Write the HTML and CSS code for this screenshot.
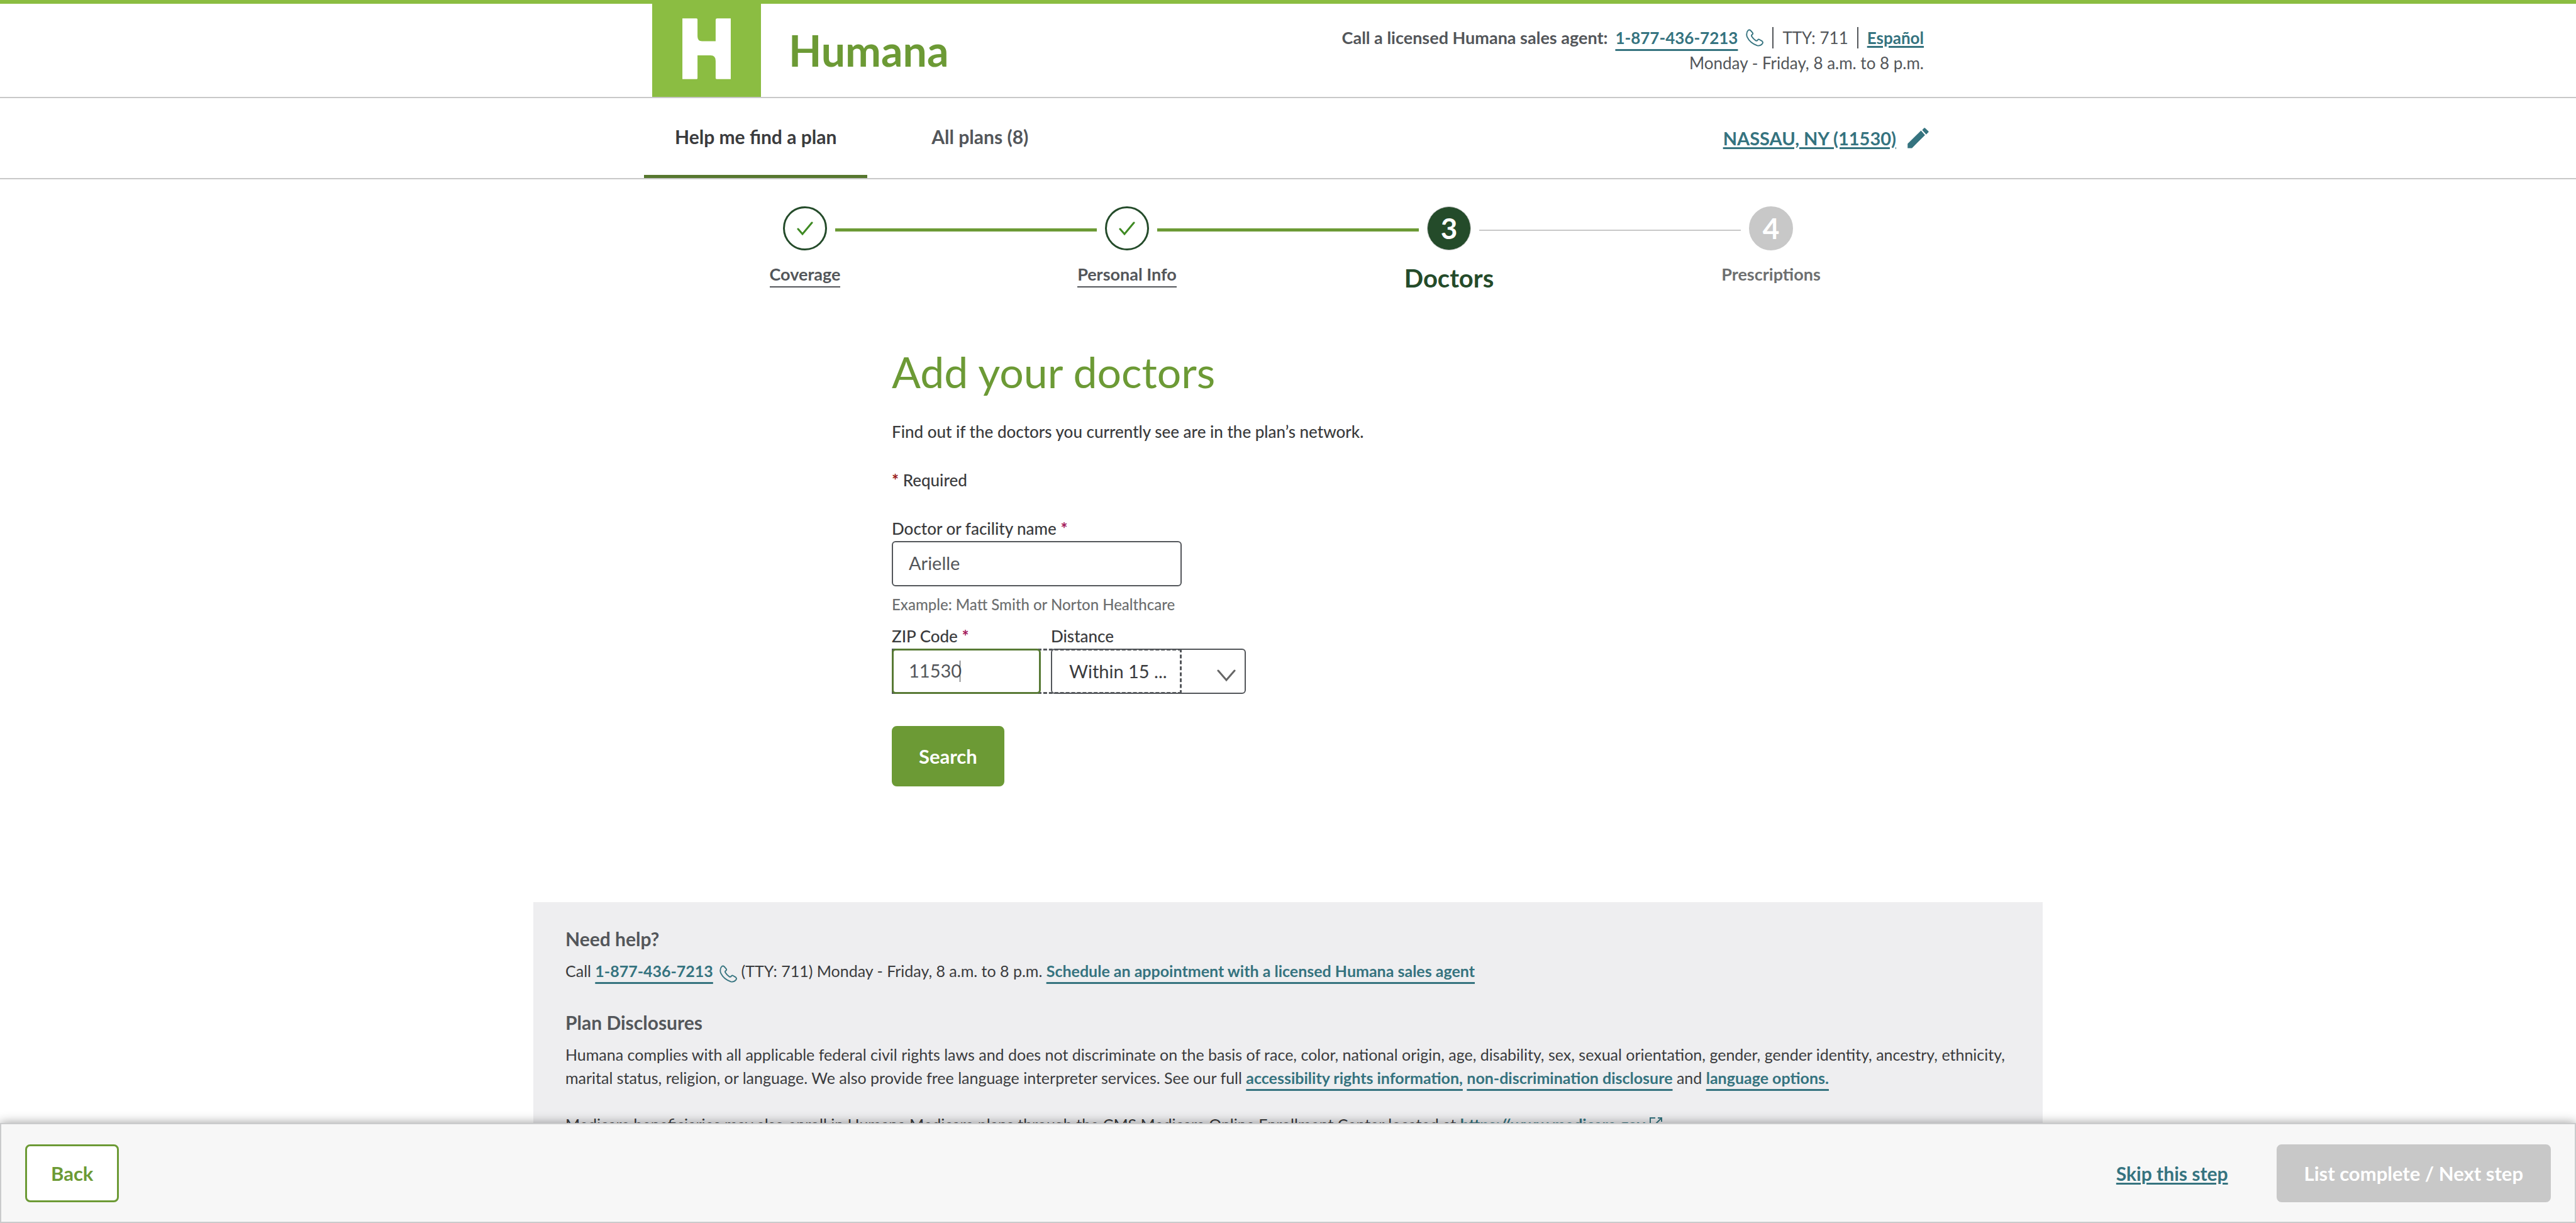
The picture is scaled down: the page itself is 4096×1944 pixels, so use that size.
FILE: index.html
```html
<!DOCTYPE html>
<html lang="en">
<head>
<meta charset="utf-8">
<meta name="viewport" content="width=device-width, initial-scale=1">
<title>Add your doctors | Humana</title>
<link rel="stylesheet" href="styles.css">
</head>
<body>
<svg class="sprite" aria-hidden="true">
  <symbol id="phone" viewBox="0 0 104 104">
    <path d="M5 30Q5 16 14 8Q21 2 28 9L40 23Q44 29 38 33Q31 37 35 45Q45 61 59 69Q66 72 69 66Q74 59 81 63L96 72Q104 79 97 88Q85 102 67 98Q25 84 8 48Q4 39 5 30Z" fill="none" stroke="currentColor" stroke-width="7" stroke-linejoin="round"/>
  </symbol>
</svg>
<div class="page">
  <header class="masthead">
    <div class="container masthead-row">
      <a class="brand" href="#" aria-label="Humana home">
        <svg class="brand-mark" viewBox="0 0 216 184" preserveAspectRatio="none" aria-hidden="true">
          <rect width="216" height="184" fill="#8bbd42"/>
          <path fill="#fff" d="M60 29H88Q90 29 90 31V64Q90 74 99 74H126V32Q126 29 129 29H156V149H129Q126 149 126 147V113Q126 102 116 102H90V147Q90 149 88 149H60Z"/>
        </svg>
        <span class="brand-name">Humana</span>
      </a>
      <div class="contact">
        <div class="contact-line">
          <strong>Call a licensed Humana sales agent:</strong>
          <a class="link phone-link" href="tel:18774367213">1-877-436-7213</a>
          <svg class="phone-icon" aria-hidden="true"><use href="#phone"/></svg>
          <span class="rule"></span>
          <span>TTY: 711</span>
          <span class="rule"></span>
          <a class="plain-link" href="#">Español</a>
        </div>
        <div class="contact-line">Monday - Friday, 8 a.m. to 8 p.m.</div>
      </div>
    </div>
  </header>

  <nav class="tabs">
    <div class="container tabs-row">
      <a class="tab tab-active" href="#">Help me find a plan</a>
      <a class="tab" href="#">All plans (8)</a>
      <div class="location">
        <a class="plain-link" href="#">NASSAU, NY (11530)</a>
        <svg class="pencil" viewBox="0 0 126 124" aria-hidden="true">
          <path fill="currentColor" d="M0 96L80 17L104 44L26 122H0ZM87 14L98 2Q101 -1 104 2L124 21Q127 24 124 27L111 40Z"/>
        </svg>
      </div>
    </div>
  </nav>

  <main>
    <ol class="container steps">
      <li class="step step-done">
        <span class="dot"><svg class="check" viewBox="0 0 26 22" aria-hidden="true"><path d="M2 12L9 20L24 2"/></svg></span>
        <span class="track"></span>
        <a class="step-name" href="#">Coverage</a>
      </li>
      <li class="step step-done">
        <span class="dot"><svg class="check" viewBox="0 0 26 22" aria-hidden="true"><path d="M2 12L9 20L24 2"/></svg></span>
        <span class="track"></span>
        <a class="step-name" href="#">Personal Info</a>
      </li>
      <li class="step step-current" aria-current="step">
        <span class="dot">3</span>
        <span class="track"></span>
        <span class="step-name">Doctors</span>
      </li>
      <li class="step step-next">
        <span class="dot">4</span>
        <span class="step-name">Prescriptions</span>
      </li>
    </ol>

    <form class="finder">
      <h1>Add your doctors</h1>
      <p class="lead">Find out if the doctors you currently see are in the plan’s network.</p>
      <p class="required"><span class="star star-red">*</span> Required</p>
      <div class="field">
        <label for="name">Doctor or facility name <span class="star">*</span></label>
        <input class="box name-box" id="name" type="text" value="Arielle">
        <p class="hint">Example: Matt Smith or Norton Healthcare</p>
      </div>
      <div class="pair">
        <div class="field zip">
          <label for="zip">ZIP Code <span class="star">*</span></label>
          <div class="zip-wrap">
            <input class="box zip-box" id="zip" type="text" inputmode="numeric" value="11530">
            <span class="caret"></span>
          </div>
        </div>
        <div class="field distance">
          <label for="distance">Distance</label>
          <div class="select-wrap">
            <select class="box" id="distance"><option>Within 15 ...</option></select>
            <svg class="chevron" viewBox="0 0 30 20" aria-hidden="true"><path d="M2 2L15 17L28 2"/></svg>
          </div>
        </div>
      </div>
      <button class="button search" type="submit">Search</button>
    </form>

    <footer class="help">
      <h2>Need help?</h2>
      <p>Call <a class="link" href="tel:18774367213">1-877-436-7213</a> <svg class="phone-icon" aria-hidden="true"><use href="#phone"/></svg> (TTY: 711) Monday - Friday, 8 a.m. to 8 p.m. <a class="link" href="#">Schedule an appointment with a licensed Humana sales agent</a></p>
      <h2>Plan Disclosures</h2>
      <p>Humana complies with all applicable federal civil rights laws and does not discriminate on the basis of race, color, national origin, age, disability, sex, sexual orientation, gender, gender identity, ancestry, ethnicity, marital status, religion, or language. We also provide free language interpreter services. See our full <a class="link" href="#">accessibility rights information,</a> <a class="link" href="#">non-discrimination disclosure</a> and <a class="link" href="#">language options.</a></p>
      <p>Medicare beneficiaries may also enroll in Humana Medicare plans through the CMS Medicare Online Enrollment Center located at <a class="link" href="#">https://www.medicare.gov</a> <svg class="external" viewBox="0 0 22 22" aria-hidden="true"><path d="M10 2H2V20H20V12M14 2H20V8M20 2L10 12"/></svg></p>
    </footer>
  </main>
</div>

<div class="actions">
  <button class="button back" type="button">Back</button>
  <div class="actions-end">
    <a class="plain-link" href="#">Skip this step</a>
    <button class="button next" type="button" disabled>List complete / Next step</button>
  </div>
</div>
</body>
</html>
```
FILE: styles.css
```css
:root {
  --green: #6c9a35;
  --green-dark: #244b2a;
  --lime: #8bbd42;
  --teal: #35737f;
  --ink: #3a3b3d;
  --grey: #53565a;
  --line: #c8c8c8;
}

*, *::after { box-sizing: border-box; }

body {
  margin: 0;
  height: 100vh;
  display: flex;
  flex-direction: column;
  background: #fff;
  color: var(--ink);
  font: 26px/38px Lato, "Open Sans", sans-serif;
}

h1, h2, p, ol { margin: 0; padding: 0; }
input, select, button { font: inherit; color: inherit; }

.sprite { position: absolute; width: 0; height: 0; }
.page { flex: 1; min-height: 0; overflow: hidden; }
.container { max-width: 2048px; margin: 0 auto; }

.link {
  color: var(--teal);
  font-weight: 700;
  text-decoration: underline 3px;
  text-decoration-skip-ink: none;
  text-underline-offset: 8px;
}
.plain-link {
  color: var(--teal);
  font-weight: 700;
  text-decoration-thickness: 3px;
  text-underline-offset: 3px;
}
.phone-icon { width: 28px; height: 28px; color: var(--teal); }

/* Header */
.masthead { border-top: 6px solid var(--lime); border-bottom: 2px solid var(--line); }
.masthead-row { display: flex; justify-content: space-between; padding: 0 13px; }
.brand { display: flex; align-items: center; gap: 44px; text-decoration: none; }
.brand-mark { width: 173px; height: 148px; display: block; }
.brand-name { color: var(--green); font-size: 68px; font-weight: 700; line-height: 148px; }
.contact { padding-top: 34px; color: var(--grey); text-align: right; line-height: 40px; }
.contact-line { display: flex; justify-content: flex-end; align-items: center; }
.contact strong { font-size: 27px; }
.phone-link { margin: 0 13px 0 12px; }
.rule { width: 2px; height: 34px; background: var(--grey); margin: 0 14px; }

/* Tabs */
.tabs { border-bottom: 2px solid var(--line); font-size: 30px; font-weight: 700; }
.tabs-row { display: flex; align-items: stretch; gap: 53px; height: 127px; }
.tab {
  display: flex;
  align-items: center;
  padding: 0 49px;
  border-bottom: 5px solid transparent;
  color: var(--grey);
  text-decoration: none;
}
.tab-active { color: var(--ink); border-color: #56772e; }
.location { display: flex; align-items: center; gap: 18px; margin-left: auto; padding-right: 5px; color: var(--teal); font-size: 29px; }
.pencil { width: 34px; height: 33px; }

/* Progress */
.steps { display: grid; grid-template-columns: repeat(4, 1fr); padding-top: 43px; list-style: none; }
.step { position: relative; display: flex; flex-direction: column; align-items: center; gap: 20px; height: 138px; }
.dot {
  display: flex;
  align-items: center;
  justify-content: center;
  width: 70px;
  height: 70px;
  border: 3px solid var(--green-dark);
  border-radius: 50%;
  font-size: 46px;
  font-weight: 700;
  color: #fff;
}
.check { width: 26px; height: 22px; fill: none; stroke: #3f8a23; stroke-width: 3; stroke-linecap: round; }
.track {
  position: absolute;
  top: 35px;
  left: calc(50% + 48px);
  width: calc(100% - 96px);
  height: 5px;
  background: var(--green);
}
.step-current .track { height: 2px; background: var(--line); margin-top: 2px; }
.step-name { font-size: 27px; font-weight: 700; line-height: 36px; color: var(--grey); text-decoration: none; }
.step-done .step-name { border-bottom: 2px solid; padding-bottom: 1px; }
.step-current .dot { background: var(--green-dark); border: 1px solid var(--line); }
.step-current .step-name { font-size: 40px; line-height: 48px; color: var(--green-dark); }
.step-next .dot { background: var(--line); border-color: var(--line); }
.step-next .step-name { color: #6d6f70; }

/* Doctor search form */
.finder { max-width: 1260px; margin: 85px auto 184px; font-weight: 500; }
h1 { color: var(--green); font-size: 68px; font-weight: 400; line-height: 80px; }
.lead { margin-top: 36px; }
.required { margin-top: 39px; }
.star { color: #a3195b; font-weight: 700; }
.star-red { color: #9b1b1b; }
label { line-height: 40px; }
.required + .field { margin-top: 38px; }
.field { display: flex; flex-direction: column; }
.box {
  width: 100%;
  height: 72px;
  padding: 0 25px 3px;
  border: 2px solid var(--grey);
  border-radius: 6px;
  background: #fff;
  color: var(--grey);
  font-size: 29px;
  font-weight: 400;
  outline: 0;
}
.name-box { max-width: 461px; }
.hint { margin-top: 10px; color: #6d6f70; font-size: 24px; }
.pair { position: relative; display: flex; gap: 16px; margin-top: 11px; }
.pair::after {
  content: "";
  position: absolute;
  left: 0;
  bottom: 0;
  width: 461px;
  height: 72px;
  border: 3px dashed var(--grey);
  pointer-events: none;
}
.zip { width: 237px; }
.zip-wrap { position: relative; z-index: 1; display: flex; }
.zip-box { border: 3px solid #587a35; padding: 0 24px 3px; }
.caret { position: absolute; left: 108px; top: 19px; width: 1px; height: 34px; background: var(--ink); }
.distance { width: 310px; }
.select-wrap { position: relative; display: flex; }
select.box { appearance: none; color: var(--ink); padding: 0 84px 0 27px; }
.chevron {
  position: absolute;
  right: 16px;
  top: 33px;
  width: 30px;
  height: 20px;
  fill: none;
  stroke: #666;
  stroke-width: 3;
  stroke-linecap: round;
  pointer-events: none;
}
.button {
  padding: 0 38px;
  border: 3px solid var(--green);
  border-radius: 8px;
  font-size: 31px;
  font-weight: 700;
}
.search { display: block; height: 96px; margin-top: 51px; padding: 0 40px; background: var(--green); color: #fff; }

/* Help and disclosures */
.help { max-width: 2400px; margin: 0 auto; padding: 39px 51px; background: #eeeef0; font-size: 25px; }
.help h2 { color: var(--grey); font-size: 30px; line-height: 38px; }
.help p { margin-top: 14px; line-height: 37px; }
.help p + h2 { margin-top: 44px; }
.help p + p { margin-top: 37px; }
.help .phone-icon { margin: 0 0 0 4px; vertical-align: -9px; }
.external { width: 22px; height: 22px; fill: none; stroke: var(--teal); stroke-width: 2; }

/* Bottom action bar */
.actions {
  position: relative;
  display: flex;
  align-items: center;
  justify-content: space-between;
  height: 159px;
  padding: 0 38px;
  border: 2px solid #cacbcc;
  background: #f7f7f7;
  box-shadow: 0 0 16px rgba(0, 0, 0, 0.4);
}
.actions .button { height: 92px; }
.actions-end { display: flex; align-items: center; gap: 77px; font-size: 30px; }
.back { background: #fff; color: var(--green); }
.actions .next { padding: 0 41px; border-color: var(--line); background: var(--line); color: #fff; }
```
